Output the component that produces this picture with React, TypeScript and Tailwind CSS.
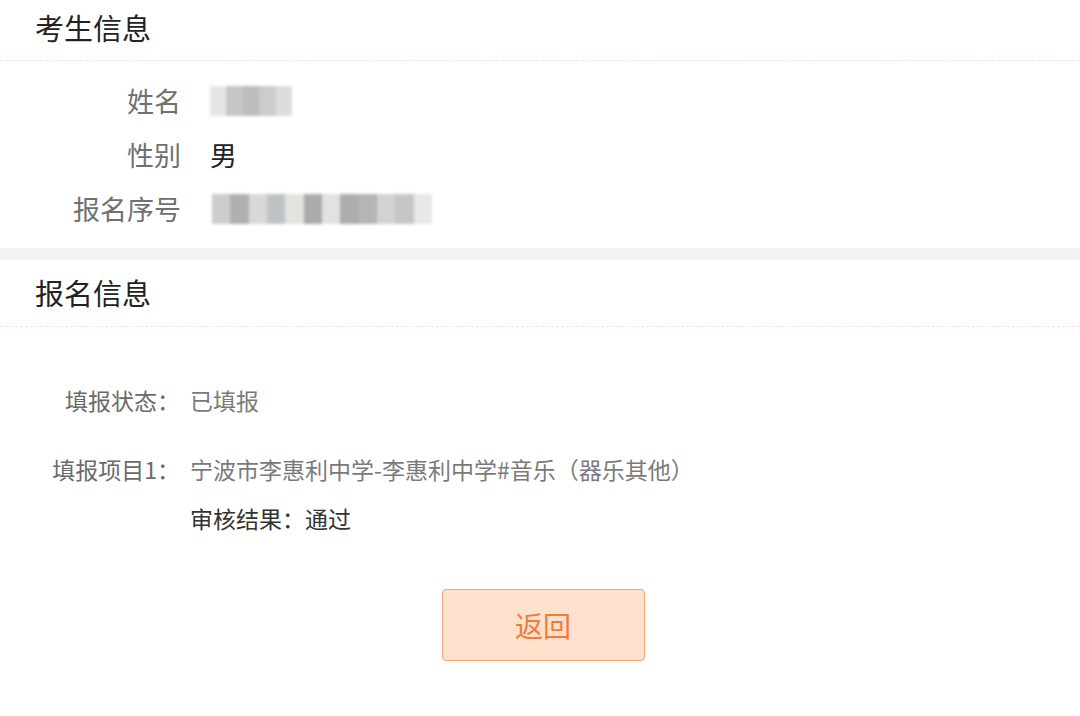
const FONT = { fontFamily: '"Noto Sans CJK SC", "Noto Sans", sans-serif' }

function Blur({ w, cells }: { w: number; cells: string[] }) {
  // 打码区域：几块灰色方格再模糊一下
  return (
    <div className="flex h-[30px] overflow-hidden blur-[1.5px]" style={{ width: w }}>
      {cells.map((c, i) => (
        <div key={i} className="h-full flex-1" style={{ backgroundColor: c }} />
      ))}
    </div>
  )
}

function InfoRow({ label, children }: { label: string; children: React.ReactNode }) {
  return (
    <div className="flex h-[54px] items-center">
      <div className="w-[181px] text-right text-[27px] text-[#707070]">{label}</div>
      <div className="pl-[29px] text-[27px] text-[#222]">{children}</div>
    </div>
  )
}

function FormRow({ label, children }: { label: string; children: React.ReactNode }) {
  return (
    <div className="flex items-center">
      <div className="w-[180px] text-right text-[23px] text-[#6a6a6a]">{label}</div>
      <div className="pl-[10px] text-[23px] text-[#7a7a7a]">{children}</div>
    </div>
  )
}

export default function App() {
  return (
    <div className="min-h-[716px] w-[1080px] bg-white" style={FONT}>
      <section>
        <div className="flex h-[61px] items-center border-b border-dashed border-[#f3e7cf] px-[35px] pb-[6px]">
          <h2 className="text-[29px] leading-none text-[#222]">考生信息</h2>
        </div>
        <div className="pt-[13px] pb-[12px]">
          <InfoRow label="姓名">
            <Blur w={82} cells={['#e6e6e6', '#c6c6c6', '#bdbdbd', '#cccccc', '#dddddd']} />
          </InfoRow>
          <InfoRow label="性别">男</InfoRow>
          <InfoRow label="报名序号">
            <div className="pl-[2px]">
              <Blur
                w={220}
                cells={['#cdcdcd', '#b0b0b0', '#d8d8d8', '#c0c3c6', '#e5e3de', '#ababab', '#e2e2e2', '#adadad', '#b6b4b4', '#d2d2d2', '#c6c6c6', '#e8e8e8']}
              />
            </div>
          </InfoRow>
        </div>
      </section>

      <div className="h-[12px] bg-[#f2f2f2]" />

      <section>
        <div className="flex h-[67px] items-center border-b border-dashed border-[#f7e4d6] px-[35px] pb-[2px]">
          <h2 className="text-[29px] leading-none text-[#222]">报名信息</h2>
        </div>
        <div className="flex flex-col pt-[56px]">
          <FormRow label="填报状态：">已填报</FormRow>
          <div className="mt-[34px]">
            <FormRow label="填报项目1：">宁波市李惠利中学-李惠利中学#音乐（器乐其他）</FormRow>
          </div>
          <div className="mt-[15px] pl-[190px] text-[23px] text-[#333]">审核结果：通过</div>
        </div>
        <div className="flex justify-center pt-[53px] pl-[6px]">
          <button className="h-[72px] w-[203px] rounded-[4px] border border-[#f5a570] bg-[#fee2cd] text-[28px] text-[#f27a38]">
            返回
          </button>
        </div>
      </section>
    </div>
  )
}
